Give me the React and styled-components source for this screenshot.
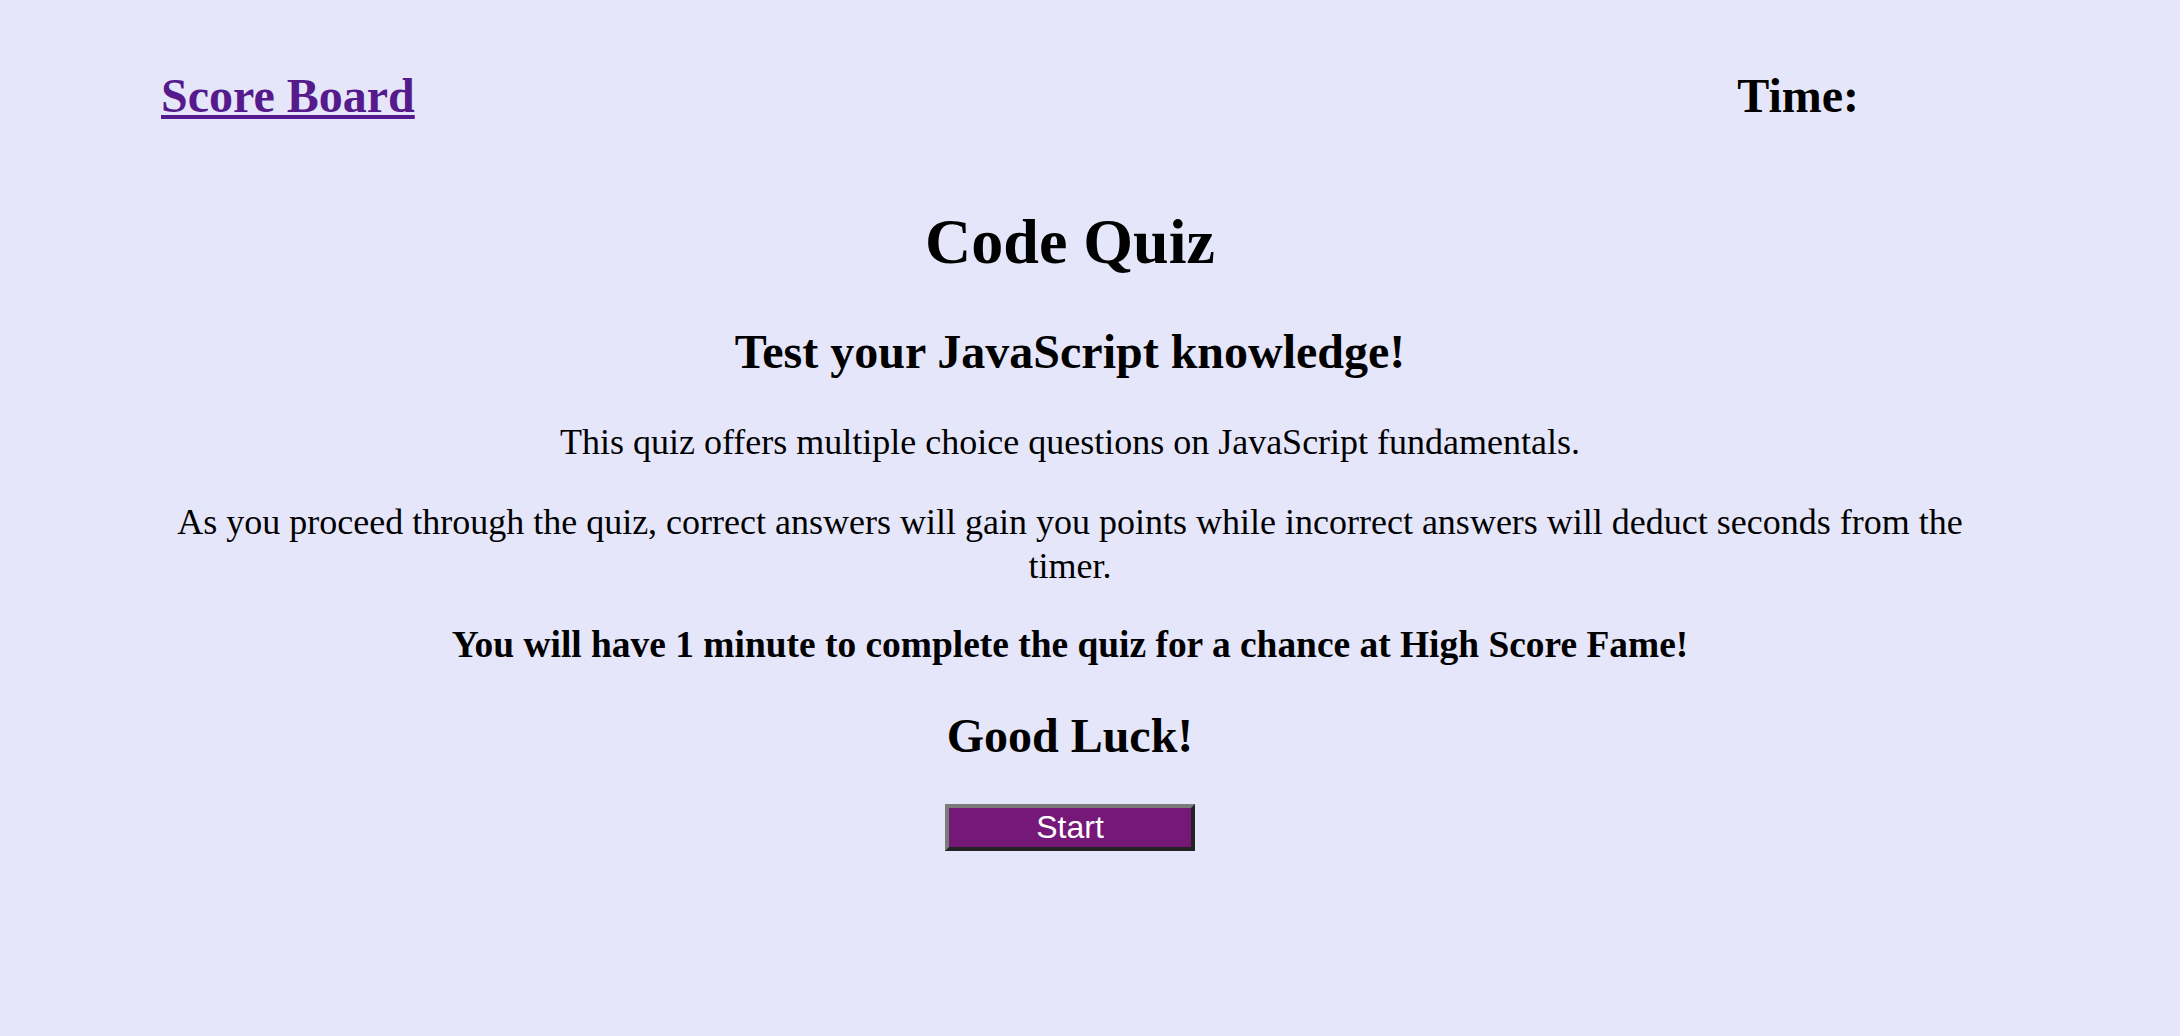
import React from "react";
import styled, { createGlobalStyle } from "styled-components";

const GlobalStyle = createGlobalStyle`
  html, body {
    margin: 0;
    padding: 0;
    background: #e6e6fa;
  }
  body {
    font-family: "Liberation Serif", "Times New Roman", serif;
    color: #000;
  }
`;

const Page = styled.div`
  min-height: 1036px;
  box-sizing: border-box;
  padding: 68px 201px 0 161px;
`;

const Header = styled.header`
  display: flex;
  justify-content: space-between;
  align-items: baseline;
`;

const HeaderHeading = styled.h2`
  margin: 0;
  font-size: 48px;
  line-height: 55px;
  font-weight: bold;
  margin-right: ${(p) => p.$inset || 0}px;
`;

const ScoreLink = styled.a`
  color: #551a8b;
  text-decoration: underline;
  text-decoration-thickness: 4px;
  text-underline-offset: 3px;
  cursor: pointer;
`;

const Main = styled.main`
  text-align: center;
`;

const Title = styled.h1`
  margin: 82px 0 0;
  font-size: 64px;
  line-height: 74px;
  font-weight: bold;
`;

const Subtitle = styled.h2`
  margin: ${(p) => p.$gap}px 0 0;
  font-size: 48px;
  line-height: 55px;
  font-weight: bold;
`;

const Paragraph = styled.p`
  margin: ${(p) => p.$gap}px 0 0;
  font-size: 36px;
  line-height: 44px;
  font-weight: normal;
`;

const Callout = styled.h3`
  margin: ${(p) => p.$gap}px 0 0;
  font-size: 37.44px;
  line-height: 44px;
  font-weight: bold;
`;

const StartButton = styled.button`
  display: block;
  box-sizing: border-box;
  width: 250px;
  height: 47px;
  margin: 41px auto 0;
  padding: 0 0 2px;
  background: #751878;
  color: #fff;
  font-family: "Liberation Sans", Arial, sans-serif;
  font-size: 32px;
  line-height: 1;
  border-width: 4px;
  border-style: solid;
  border-color: #7b7b7b #242424 #242424 #7b7b7b;
  cursor: pointer;
`;

export default function App() {
  return (
    <>
      <GlobalStyle />
      <Page>
        <Header>
          <HeaderHeading>
            <ScoreLink href="#">Score Board</ScoreLink>
          </HeaderHeading>
          <HeaderHeading $inset={120}>Time:</HeaderHeading>
        </Header>
        <Main>
          <Title>Code Quiz</Title>
          <Subtitle $gap={44.5}>Test your JavaScript knowledge!</Subtitle>
          <Paragraph $gap={41}>
            This quiz offers multiple choice questions on JavaScript fundamentals.
          </Paragraph>
          <Paragraph $gap={36}>
            As you proceed through the quiz, correct answers will gain you points
            while incorrect answers will deduct seconds from the timer.
          </Paragraph>
          <Callout $gap={35.5}>
            You will have 1 minute to complete the quiz for a chance at High Score Fame!
          </Callout>
          <Subtitle $gap={41}>Good Luck!</Subtitle>
          <StartButton type="button">Start</StartButton>
        </Main>
      </Page>
    </>
  );
}
